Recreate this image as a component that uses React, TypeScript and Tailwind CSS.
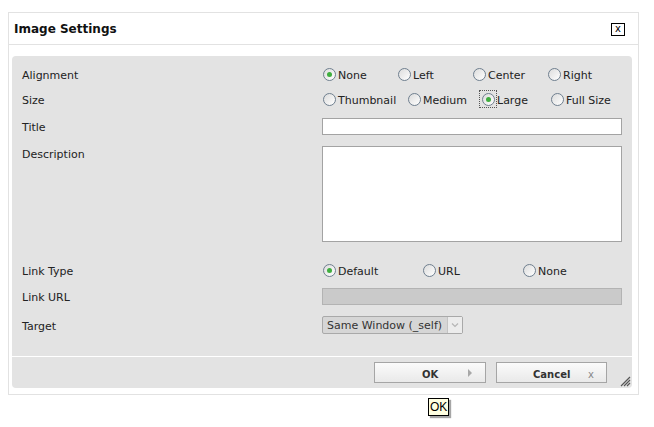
import React from "react";

type RadioProps = {
  label: string;
  checked?: boolean;
  focused?: boolean;
  width?: string;
};

function Radio({ label, checked, focused, width }: RadioProps) {
  return (
    <label className={`flex items-center h-[18px] shrink-0 ${width ?? ""}`}>
      <span
        className={`relative flex items-center justify-center w-[16px] h-[16px] -ml-[1px] ${
          focused ? "outline outline-1 outline-dotted outline-[#555]" : ""
        }`}
      >
        <span className="flex items-center justify-center w-[13px] h-[13px] rounded-full border border-[#6f7f8f] bg-gradient-to-br from-[#dcdcdc] to-white">
          {checked && <span className="w-[5px] h-[5px] rounded-full bg-[#3fae3f]" />}
        </span>
      </span>
      <span className="ml-[1px] pt-[2px] text-[11px] leading-none text-[#222]">{label}</span>
    </label>
  );
}

function Row({
  label,
  className,
  top,
  children,
}: {
  label: string;
  className?: string;
  top?: boolean;
  children: React.ReactNode;
}) {
  return (
    <div className={`flex ${top ? "items-start" : "items-center"} ${className ?? ""}`}>
      <div
        className={`w-[300px] shrink-0 text-[11px] text-[#222] ${
          top ? "leading-[16px] pt-[1px]" : "leading-none pt-[2px]"
        }`}
      >
        {label}
      </div>
      <div className="flex items-center w-[300px]">{children}</div>
    </div>
  );
}

export default function App() {
  return (
    <div className="relative w-[654px] h-[427px] bg-white font-['DejaVu_Sans',Tahoma,sans-serif] overflow-hidden">
      <div className="ml-[8px] mt-[12px] w-[631px] h-[383px] border border-[#e2e2e2] bg-white flex flex-col">
        {/* title bar */}
        <div className="flex items-center justify-between h-[32px] border-b border-[#e2e2e2] pl-[5px] pr-[13px]">
          <span className="font-bold text-[12px] text-[#111]">Image Settings</span>
          <span className="flex items-center justify-center w-[14px] h-[13px] border border-black text-[10px] leading-none text-black mt-[1px]">
            x
          </span>
        </div>

        {/* form panel */}
        <div className="mt-[11px] ml-[3px] w-[620px] h-[332px] rounded-[4px] bg-[#e3e3e3] flex flex-col">
          <div className="flex-1 flex flex-col pt-[9px] pl-[10px]">
            <Row label="Alignment" className="h-[18px]">
              <Radio label="None" checked width="w-[75px]" />
              <Radio label="Left" width="w-[75px]" />
              <Radio label="Center" width="w-[75px]" />
              <Radio label="Right" />
            </Row>
            <Row label="Size" className="h-[18px] mt-[7px]">
              <Radio label="Thumbnail" width="w-[85px]" />
              <Radio label="Medium" width="w-[74px]" />
              <Radio label="Large" checked focused width="w-[69px]" />
              <Radio label="Full Size" />
            </Row>
            <Row label="Title" className="h-[17px] mt-[10px]">
              <input className="w-[300px] h-[17px] border border-[#a3a3a3] bg-white outline-none" />
            </Row>
            <Row label="Description" top className="h-[96px] mt-[11px]">
              <textarea className="w-[300px] h-[96px] border border-[#a3a3a3] bg-white outline-none resize-none" />
            </Row>
            <Row label="Link Type" className="h-[18px] mt-[19px]">
              <Radio label="Default" checked width="w-[100px]" />
              <Radio label="URL" width="w-[100px]" />
              <Radio label="None" />
            </Row>
            <Row label="Link URL" className="h-[17px] mt-[9px]">
              <div className="w-[300px] h-[17px] border border-[#b3b3b3] bg-[#cacaca]" />
            </Row>
            <Row label="Target" className="h-[18px] mt-[11px]">
              <div className="flex items-stretch w-[141px] h-[18px] border border-[#a9a9a9] rounded-[2px] bg-[#d6d6d6]">
                <span className="flex-1 flex items-center pl-[4px] pt-[1px] text-[11px] leading-none text-[#333] whitespace-nowrap">
                  Same Window (_self)
                </span>
                <span className="flex items-center justify-center w-[15px] bg-[#ececec] border-l border-[#c4c4c4]">
                  <svg width="8" height="6" viewBox="0 0 8 6">
                    <path d="M1 1.5 L4 4.5 L7 1.5" fill="none" stroke="#b5b5b5" strokeWidth="1.2" />
                  </svg>
                </span>
              </div>
            </Row>
          </div>

          {/* button bar */}
          <div className="relative h-[32px] border-t border-white flex items-start justify-end pt-[5px] pr-[25px] gap-[10px]">
            <button className="relative w-[112px] h-[21px] border border-[#a5a5a5] bg-gradient-to-b from-[#fbfbfb] to-[#e9e9e9] font-bold text-[10px] text-[#333]">
              <span className="absolute left-[47px] top-[4px]">OK</span>
              <svg className="absolute left-[93px] top-[6px]" width="4" height="8" viewBox="0 0 4 8">
                <path d="M0 0 L4 4 L0 8 Z" fill="#a8a8a8" />
              </svg>
            </button>
            <button className="relative w-[111px] h-[21px] border border-[#a5a5a5] bg-gradient-to-b from-[#fbfbfb] to-[#e9e9e9] font-bold text-[10px] text-[#333]">
              <span className="absolute left-[36px] top-[4px]">Cancel</span>
              <span className="absolute left-[91px] top-[4px] font-normal text-[#888]">x</span>
            </button>
            {/* resize grip */}
            <svg className="absolute right-[1px] bottom-[1px]" width="12" height="12" viewBox="0 0 12 12">
              <path d="M11 2 L2 11 M11 5 L5 11 M11 8 L8 11" stroke="#555" strokeWidth="1.2" />
            </svg>
          </div>
        </div>
      </div>

      {/* tooltip over the OK button */}
      <div className="absolute left-[428px] top-[398px] h-[18px] px-[1px] flex items-center border border-black bg-[#ffffe1] shadow-[2px_2px_1px_rgba(0,0,0,0.35)] font-['Liberation_Sans',Arial,sans-serif] text-[12px] leading-none text-black">
        OK
      </div>
    </div>
  );
}
